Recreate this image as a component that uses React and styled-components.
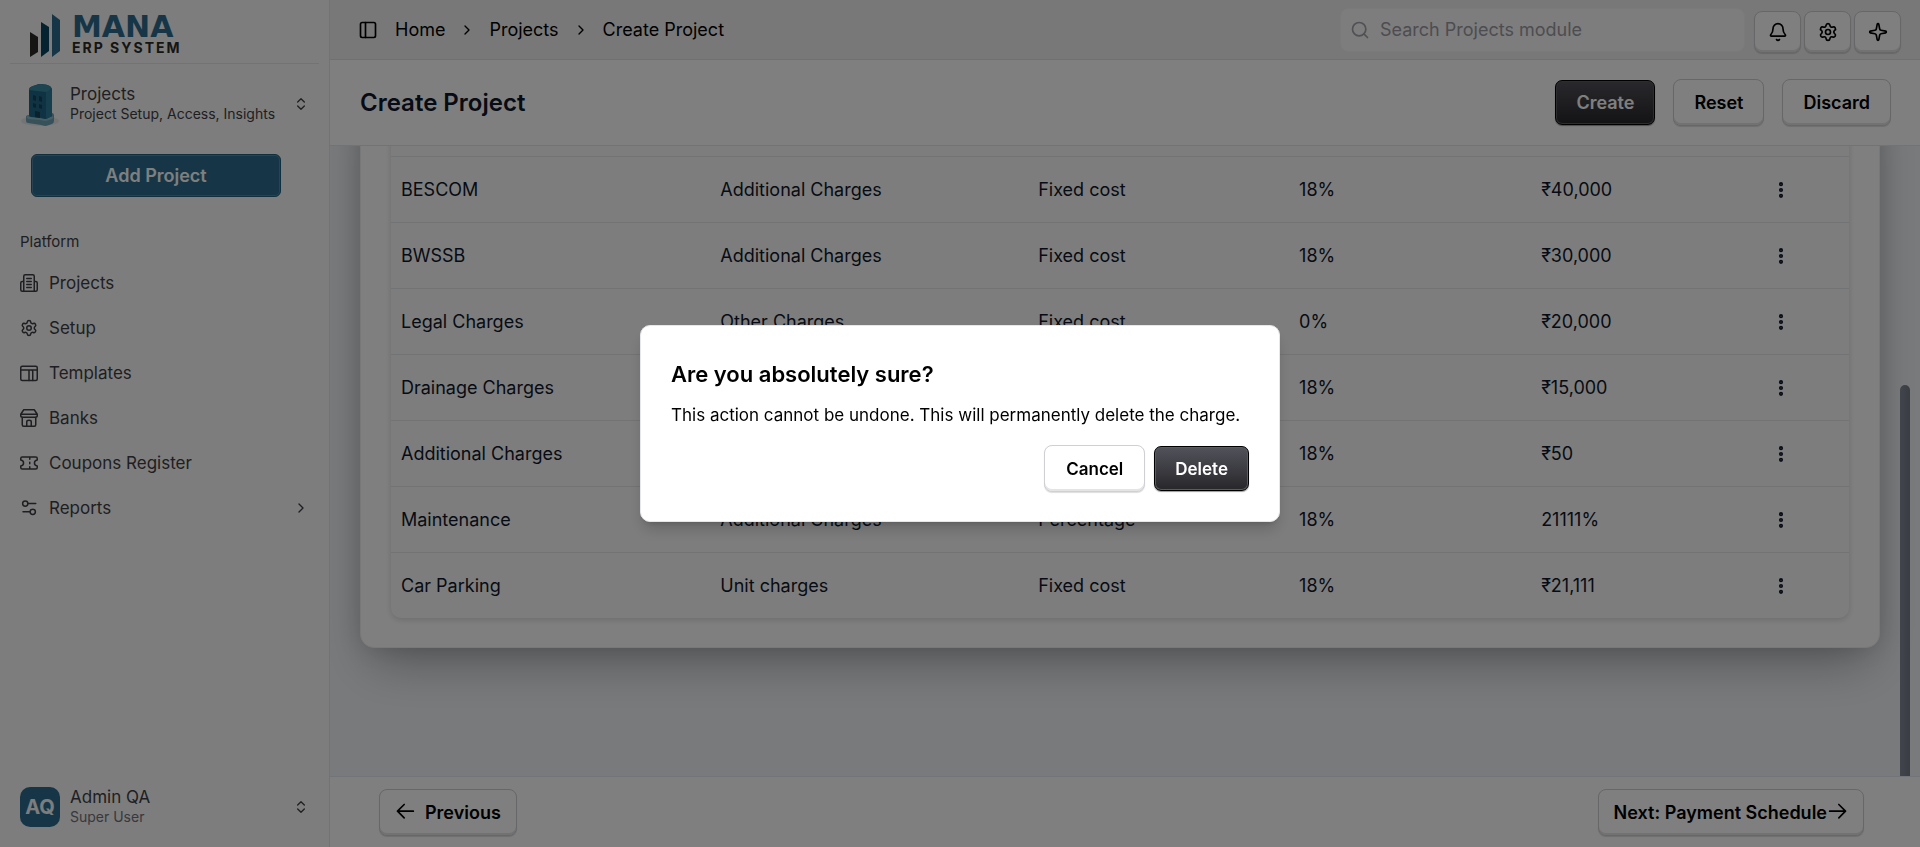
import React from "react";
import styled, { createGlobalStyle, css } from "styled-components";
import {
  PanelLeft, ChevronRight, ChevronsUpDown, Search, Bell, Settings, Sparkle,
  EllipsisVertical,
} from "lucide-react";

const Global = createGlobalStyle`
  *, *::before, *::after { box-sizing: border-box; }
  html, body, #root { height: 100%; }
  body { margin: 0; font-family: Inter, "Liberation Sans", sans-serif; font-size: 17px; color: #000; background: #fff; }
  button, input { font: inherit; color: inherit; }
  button { cursor: pointer; }
  a { color: inherit; text-decoration: none; }
  h1, h2, p { margin: 0; }
`;

const Shell = styled.div`
  display: flex;
  height: 100vh;
  min-height: 640px;
`;

const Sidebar = styled.aside`
  flex: 0 0 330px;
  display: flex;
  flex-direction: column;
  background: #fafafa;
  border-right: 1px solid #e5e7eb;
  color: #3f3f46;
`;

const LogoBar = styled.div`
  height: 64px;
  margin: 0 10px;
  padding: 13px 20px 0;
  display: flex;
  gap: 11px;
  border-bottom: 1px solid #e5e7eb;
`;

const LogoText = styled.div`
  display: flex;
  flex-direction: column;
`;

const LogoName = styled.span`
  font: 700 30px/27px "DejaVu Sans", sans-serif;
  color: #2d6d8e;
`;

const LogoSub = styled.span`
  font: 700 14px/16px Inter, sans-serif;
  letter-spacing: 2px;
  color: #2b2b29;
`;

const Switcher = styled.button`
  display: flex;
  align-items: center;
  width: 100%;
  height: 80px;
  margin-top: ${(p) => (p.$footer ? "auto" : "0")};
  border: 0;
  background: none;
  text-align: left;
  padding: 10px 20px;
  gap: 10px;
`;

const SwitcherText = styled.span`
  display: flex;
  flex-direction: column;
  flex: 1;
  white-space: nowrap;
  min-width: 0;
`;

const SwitcherTitle = styled.span`
  font-size: 17px;
  line-height: 20px;
`;

const SwitcherNote = styled.span`
  font-size: 14px;
  line-height: 20px;
  color: ${(p) => (p.$muted ? "#71717a" : "inherit")};
`;

const Avatar = styled.span`
  display: grid;
  place-items: center;
  width: 40px;
  height: 40px;
  border-radius: 10px;
  background: #2d6d8e;
  color: #fafafa;
  font-weight: 700;
  font-size: 20px;
`;

const AddButton = styled.button`
  height: 43px;
  margin: 10px 48px 0 31px;
  border: 1px solid #255f7d;
  border-radius: 6px;
  background: #2d6d8e;
  box-shadow: inset 0 0 0 1px #5089a8;
  color: #fff;
  font-weight: 600;
  font-size: 18px;
`;

const NavLabel = styled.h2`
  margin: 35px 20px 8px;
  font-size: 15px;
  line-height: 20px;
  font-weight: 400;
`;

const Nav = styled.nav`
  display: flex;
  flex-direction: column;
`;

const NavLink = styled.a`
  display: flex;
  align-items: center;
  gap: 11px;
  height: 45px;
  padding: 0 20px;
  font-size: 17px;
  span { flex: 1; }
`;

const Main = styled.main`
  flex: 1;
  min-width: 0;
  display: flex;
  flex-direction: column;
`;

const TopBar = styled.header`
  flex: 0 0 60px;
  display: flex;
  align-items: center;
  gap: 9px;
  padding: 0 19px 0 28px;
  background: #f0f0f0;
  border-bottom: 1px solid #e0e1e5;
`;

const IconButton = styled.button`
  display: grid;
  place-items: center;
  border: 0;
  padding: 0;
  background: none;
  width: 20px;
  height: 20px;
`;

const Crumbs = styled.nav`
  display: flex;
  align-items: center;
  flex: 1;
  gap: 14px;
  margin-left: 8px;
  font-size: 18px;
`;

const SearchBox = styled.label`
  display: flex;
  align-items: center;
  gap: 10px;
  width: 405px;
  height: 44px;
  padding: 0 9px;
  border-radius: 8px;
  background: #fafafa;
  color: #a1a1aa;
  border: 1px solid #f4f4f5;
`;

const SearchInput = styled.input`
  flex: 1;
  min-width: 0;
  border: 0;
  outline: 0;
  padding: 0;
  background: none;
  font-size: 18px;
  &::placeholder { color: #9a9aa3; opacity: 1; }
`;

const raised = css`
  border: 1px solid #cfcfd4;
  border-radius: 8px;
  background: #fff;
  box-shadow: inset 0 -2px 0 #e4e4e7, 0 1px 1px #00000022;
`;

const ToolGroup = styled.div`
  display: flex;
  gap: 3px;
  padding-top: 4px;
`;

const ToolButton = styled.button`
  ${raised}
  display: grid;
  place-items: center;
  width: 47px;
  height: 42px;
  padding: 0;
`;

const Button = styled.button`
  ${raised}
  display: inline-flex;
  align-items: center;
  justify-content: center;
  gap: ${(p) => p.$gap || 0}px;
  height: 47px;
  padding: 0 ${(p) => p.$pad || 20}px;
  font-weight: 600;
  font-size: ${(p) => (p.$compact ? 17 : 18)}px;
  white-space: nowrap;
  ${(p) => p.$dark && css`
    height: 45px;
    border: 1px solid #000;
    border-radius: 7px;
    color: #fff;
    background: linear-gradient(#52525b, #27272a);
    box-shadow: inset 0 0 0 1px #5b5b63, 0 1px 1px #00000066;
  `}
`;

const TitleBar = styled.div`
  flex: 0 0 86px;
  display: flex;
  align-items: center;
  justify-content: space-between;
  padding: 0 29px 0 30px;
  background: #fff;
  border-bottom: 1px solid #e5e7eb;
`;

const Title = styled.h1`
  font-size: 24px;
  font-weight: 600;
  color: #0f172a;
`;

const Actions = styled.div`
  display: flex;
  align-items: center;
  gap: 18px;
`;

const Viewport = styled.div`
  flex: 1;
  min-height: 0;
  display: flex;
  overflow: hidden;
  background: #f1f5f9;
`;

const Content = styled.div`
  flex: 1;
  min-width: 0;
  display: flex;
  flex-direction: column;
  justify-content: flex-end;
  padding: 0 20px 128px 30px;
`;

const Track = styled.div`
  flex: 0 0 20px;
  display: flex;
  flex-direction: column;
  justify-content: flex-end;
`;

const Thumb = styled.div`
  width: 10px;
  height: 62%;
  border-radius: 5px 5px 0 0;
  background: linear-gradient(90deg, #848b98, #737a86);
`;

const Card = styled.section`
  flex: none;
  padding: 29px 30px;
  border-radius: 14px;
  background: #fff;
  border: 1px solid #f1f1f1;
  box-shadow: 0 25px 50px -12px #00000050, 0 0 24px #00000020;
`;

const TableWrap = styled.div`
  border-radius: 10px;
  overflow: hidden;
  background: #fafafa;
  box-shadow: 0 2px 6px #00000026;
`;

const Table = styled.table`
  width: 100%;
  table-layout: fixed;
  border-collapse: collapse;
  color: #0f172a;
  font-size: 18px;
`;

const HeadCell = styled.th`
  height: 50px;
  width: ${(p) => p.$w};
`;

const Cell = styled.td`
  height: 66px;
  padding: 1px 10px 0;
  border-top: 1px solid #e5e7eb;
  white-space: nowrap;
`;

const Footer = styled.footer`
  flex: 0 0 71px;
  display: flex;
  align-items: center;
  justify-content: space-between;
  padding: 0 56px 0 49px;
  background: #fff;
  border-top: 1px solid #e2e8f0;
`;

const Overlay = styled.div`
  position: fixed;
  inset: 0;
  display: grid;
  place-items: center;
  background: rgba(0, 0, 0, 0.5);
`;

const Dialog = styled.div`
  width: 640px;
  padding: 34px 30px 29px;
  border-radius: 10px;
  background: #fff;
  border: 1px solid #e5e7eb;
  box-shadow: 0 10px 15px -3px #0000002e, 0 4px 6px -4px #0000002e;
`;

const DialogTitle = styled.h2`
  font-size: 22px;
  line-height: 28px;
  font-weight: 600;
`;

const DialogText = styled.p`
  margin: 15px 0 18px;
  font-size: 17px;
  line-height: 24px;
`;

const DialogActions = styled.div`
  display: flex;
  align-items: center;
  justify-content: flex-end;
  gap: 9px;
`;

const LogoMark = () => (
  <svg width="31" height="45" viewBox="0 0 31 45" aria-hidden="true">
    <path d="M0 19l8 5v15l-8 5z" fill="#2b2b29" />
    <path d="M11 9l8 5v24l-8 6z" fill="#0a4560" />
    <path d="M22 1l8 6v31l-8 6z" fill="#2d6d8e" />
  </svg>
);

const Building = () => (
  <svg width="40" height="48" viewBox="0 0 40 48" aria-hidden="true">
    <ellipse cx="20" cy="41" rx="19" ry="5" fill="#e9e9e9" />
    <path d="M6 37q0-2 3-2l23-2q2 0 2 3v5q0 2-2 3l-6 2q-2 0-5-1L8 43q-2 0-2-2z" fill="#6fa3b4" />
    <path d="M7 36l18 3 8-3q1 2-1 3l-6 2q-3 0-5-1L8 39q-2-1-1-3z" fill="#8fbccb" />
    <path d="M9 10q0-3 4-4l6-2q9 0 12 3 1 1 1 4v24q0 2-2 2l-4 2q-2 0-5-1L11 37q-2 0-2-2z" fill="#1e6784" />
    <path d="M26 12l5-4q1 1 1 3v24q0 2-2 2l-4 2z" fill="#2c7c9a" />
    <path d="M9 10q0-3 4-4l6-2q9 0 12 3 0 3-5 5z" fill="#3a88a3" />
    <path d="M13 15l3 1v5l-3-1zM19 16l3 1v5l-3-1zM13 23l3 1v4l-3-1zM19 24l3 1v4l-3-1zM15 31l5 1v6l-5-1z" fill="#124459" />
  </svg>
);

const Glyph = ({ size = 18, width = 2, children }) => (
  <svg width={size} height={size} viewBox="0 0 24 24" fill="none" stroke="currentColor" strokeWidth={width} strokeLinecap="round" strokeLinejoin="round" aria-hidden="true">{children}</svg>
);

const NAV = [
  ["Projects", <Glyph><path d="M5 23V3q0-2 2-2h10q2 0 2 2v20M5 10H3q-2 0-2 2v9q0 2 2 2h18q2 0 2-2v-9q0-2-2-2h-2M9 6h6M9 10h6M9 14h6M9 18h6" /></Glyph>],
  ["Setup", <Settings size={18} />],
  ["Templates", <Glyph><rect x="1" y="3" width="22" height="19" rx="2" /><path d="M1 8h22M12 8v14M12 8h3q2 0 2 2v12" /></Glyph>],
  ["Banks", <Glyph><path d="M5 1h14l4 6v2q0 2-3 2H4q-3 0-3-2V7zM1 7h22M3 11v10q0 2 2 2h14q2 0 2-2V11M9 23v-6q0-2 3-2t3 2v6" /></Glyph>],
  ["Coupons Register", <Glyph><path d="M1 8V6q0-2 2-2h18q2 0 2 2v2c-5 1-5 7 0 8v2q0 2-2 2H3q-2 0-2-2v-2c5-1 5-7 0-8zM13 4v3M13 11v2M13 17v3" /></Glyph>],
  ["Reports", <Glyph><circle cx="7" cy="6" r="3.5" /><path d="M11 6h10M4 17h9" /><circle cx="17" cy="17" r="3.5" /></Glyph>],
];

const COLUMNS = [
  ["Charge", "21.9%"], ["Category", "21.8%"], ["Type", "17.9%"],
  ["Tax", "16.6%"], ["Amount", "15.8%"], ["Actions", "6%"],
];

const ROWS = [
  ["BESCOM", "Additional Charges", "Fixed cost", "18%", "₹40,000"],
  ["BWSSB", "Additional Charges", "Fixed cost", "18%", "₹30,000"],
  ["Legal Charges", "Other Charges", "Fixed cost", "0%", "₹20,000"],
  ["Drainage Charges", "Additional Charges", "Fixed cost", "18%", "₹15,000"],
  ["Additional Charges", "Additional Charges", "Fixed cost", "18%", "₹50"],
  ["Maintenance", "Additional Charges", "Percentage", "18%", "21111%"],
  ["Car Parking", "Unit charges", "Fixed cost", "18%", "₹21,111"],
];

export default function App() {
  return (
    <>
      <Global />
      <Shell>
        <Sidebar>
          <LogoBar>
            <LogoMark />
            <LogoText>
              <LogoName>MANA</LogoName>
              <LogoSub>ERP SYSTEM</LogoSub>
            </LogoText>
          </LogoBar>
          <Switcher type="button">
            <Building />
            <SwitcherText>
              <SwitcherTitle>Projects</SwitcherTitle>
              <SwitcherNote>Project Setup, Access, Insights</SwitcherNote>
            </SwitcherText>
            <ChevronsUpDown size={16} />
          </Switcher>
          <AddButton type="button">Add Project</AddButton>
          <NavLabel>Platform</NavLabel>
          <Nav>
            {NAV.map(([label, icon]) => (
              <NavLink href="#" key={label}>
                {icon}
                <span>{label}</span>
                {label === "Reports" && <ChevronRight size={16} />}
              </NavLink>
            ))}
          </Nav>
          <Switcher type="button" $footer>
            <Avatar>AQ</Avatar>
            <SwitcherText>
              <SwitcherTitle>Admin QA</SwitcherTitle>
              <SwitcherNote $muted>Super User</SwitcherNote>
            </SwitcherText>
            <ChevronsUpDown size={16} />
          </Switcher>
        </Sidebar>
        <Main>
          <TopBar>
            <IconButton type="button" aria-label="Toggle sidebar"><PanelLeft size={20} /></IconButton>
            <Crumbs aria-label="Breadcrumb">
              <a href="#">Home</a>
              <ChevronRight size={16} />
              <a href="#">Projects</a>
              <ChevronRight size={16} />
              <a href="#">Create Project</a>
            </Crumbs>
            <SearchBox>
              <Search size={20} />
              <SearchInput type="text" aria-label="Search" placeholder="Search Projects module" />
            </SearchBox>
            <ToolGroup>
              <ToolButton type="button" aria-label="Notifications"><Bell size={20} /></ToolButton>
              <ToolButton type="button" aria-label="Settings"><Settings size={20} /></ToolButton>
              <ToolButton type="button" aria-label="Assistant"><Sparkle size={20} /></ToolButton>
            </ToolGroup>
          </TopBar>
          <TitleBar>
            <Title>Create Project</Title>
            <Actions>
              <Button type="button" $dark>Create</Button>
              <Button type="button">Reset</Button>
              <Button type="button">Discard</Button>
            </Actions>
          </TitleBar>
          <Viewport>
            <Content>
              <Card>
                <TableWrap>
                  <Table>
                    <thead>
                      <tr>{COLUMNS.map(([n, w]) => <HeadCell key={n} $w={w} scope="col" aria-label={n} />)}</tr>
                    </thead>
                    <tbody>
                      {ROWS.map((row) => (
                        <tr key={row[0]}>
                          {row.map((value, i) => <Cell key={i}>{value}</Cell>)}
                          <Cell>
                            <IconButton type="button" aria-label={`Actions for ${row[0]}`}><EllipsisVertical size={20} strokeWidth={3} /></IconButton>
                          </Cell>
                        </tr>
                      ))}
                    </tbody>
                  </Table>
                </TableWrap>
              </Card>
            </Content>
            <Track><Thumb /></Track>
          </Viewport>
          <Footer>
            <Button type="button" $gap={10} $pad={15}>
              <Glyph size={20}><path d="M22 11H3M11 3l-8 8 8 8" /></Glyph>
              Previous
            </Button>
            <Button type="button" $pad={15} $gap={1}>
              Next: Payment Schedule
              <Glyph size={20}><path d="M2 11h19M13 3l8 8-8 8" /></Glyph>
            </Button>
          </Footer>
        </Main>
      </Shell>
      <Overlay>
        <Dialog role="alertdialog" aria-modal="true" aria-labelledby="dialog-title" aria-describedby="dialog-text">
          <DialogTitle id="dialog-title">Are you absolutely sure?</DialogTitle>
          <DialogText id="dialog-text">This action cannot be undone. This will permanently delete the charge.</DialogText>
          <DialogActions>
            <Button type="button" $compact $pad={21}>Cancel</Button>
            <Button type="button" $compact $dark>Delete</Button>
          </DialogActions>
        </Dialog>
      </Overlay>
    </>
  );
}
